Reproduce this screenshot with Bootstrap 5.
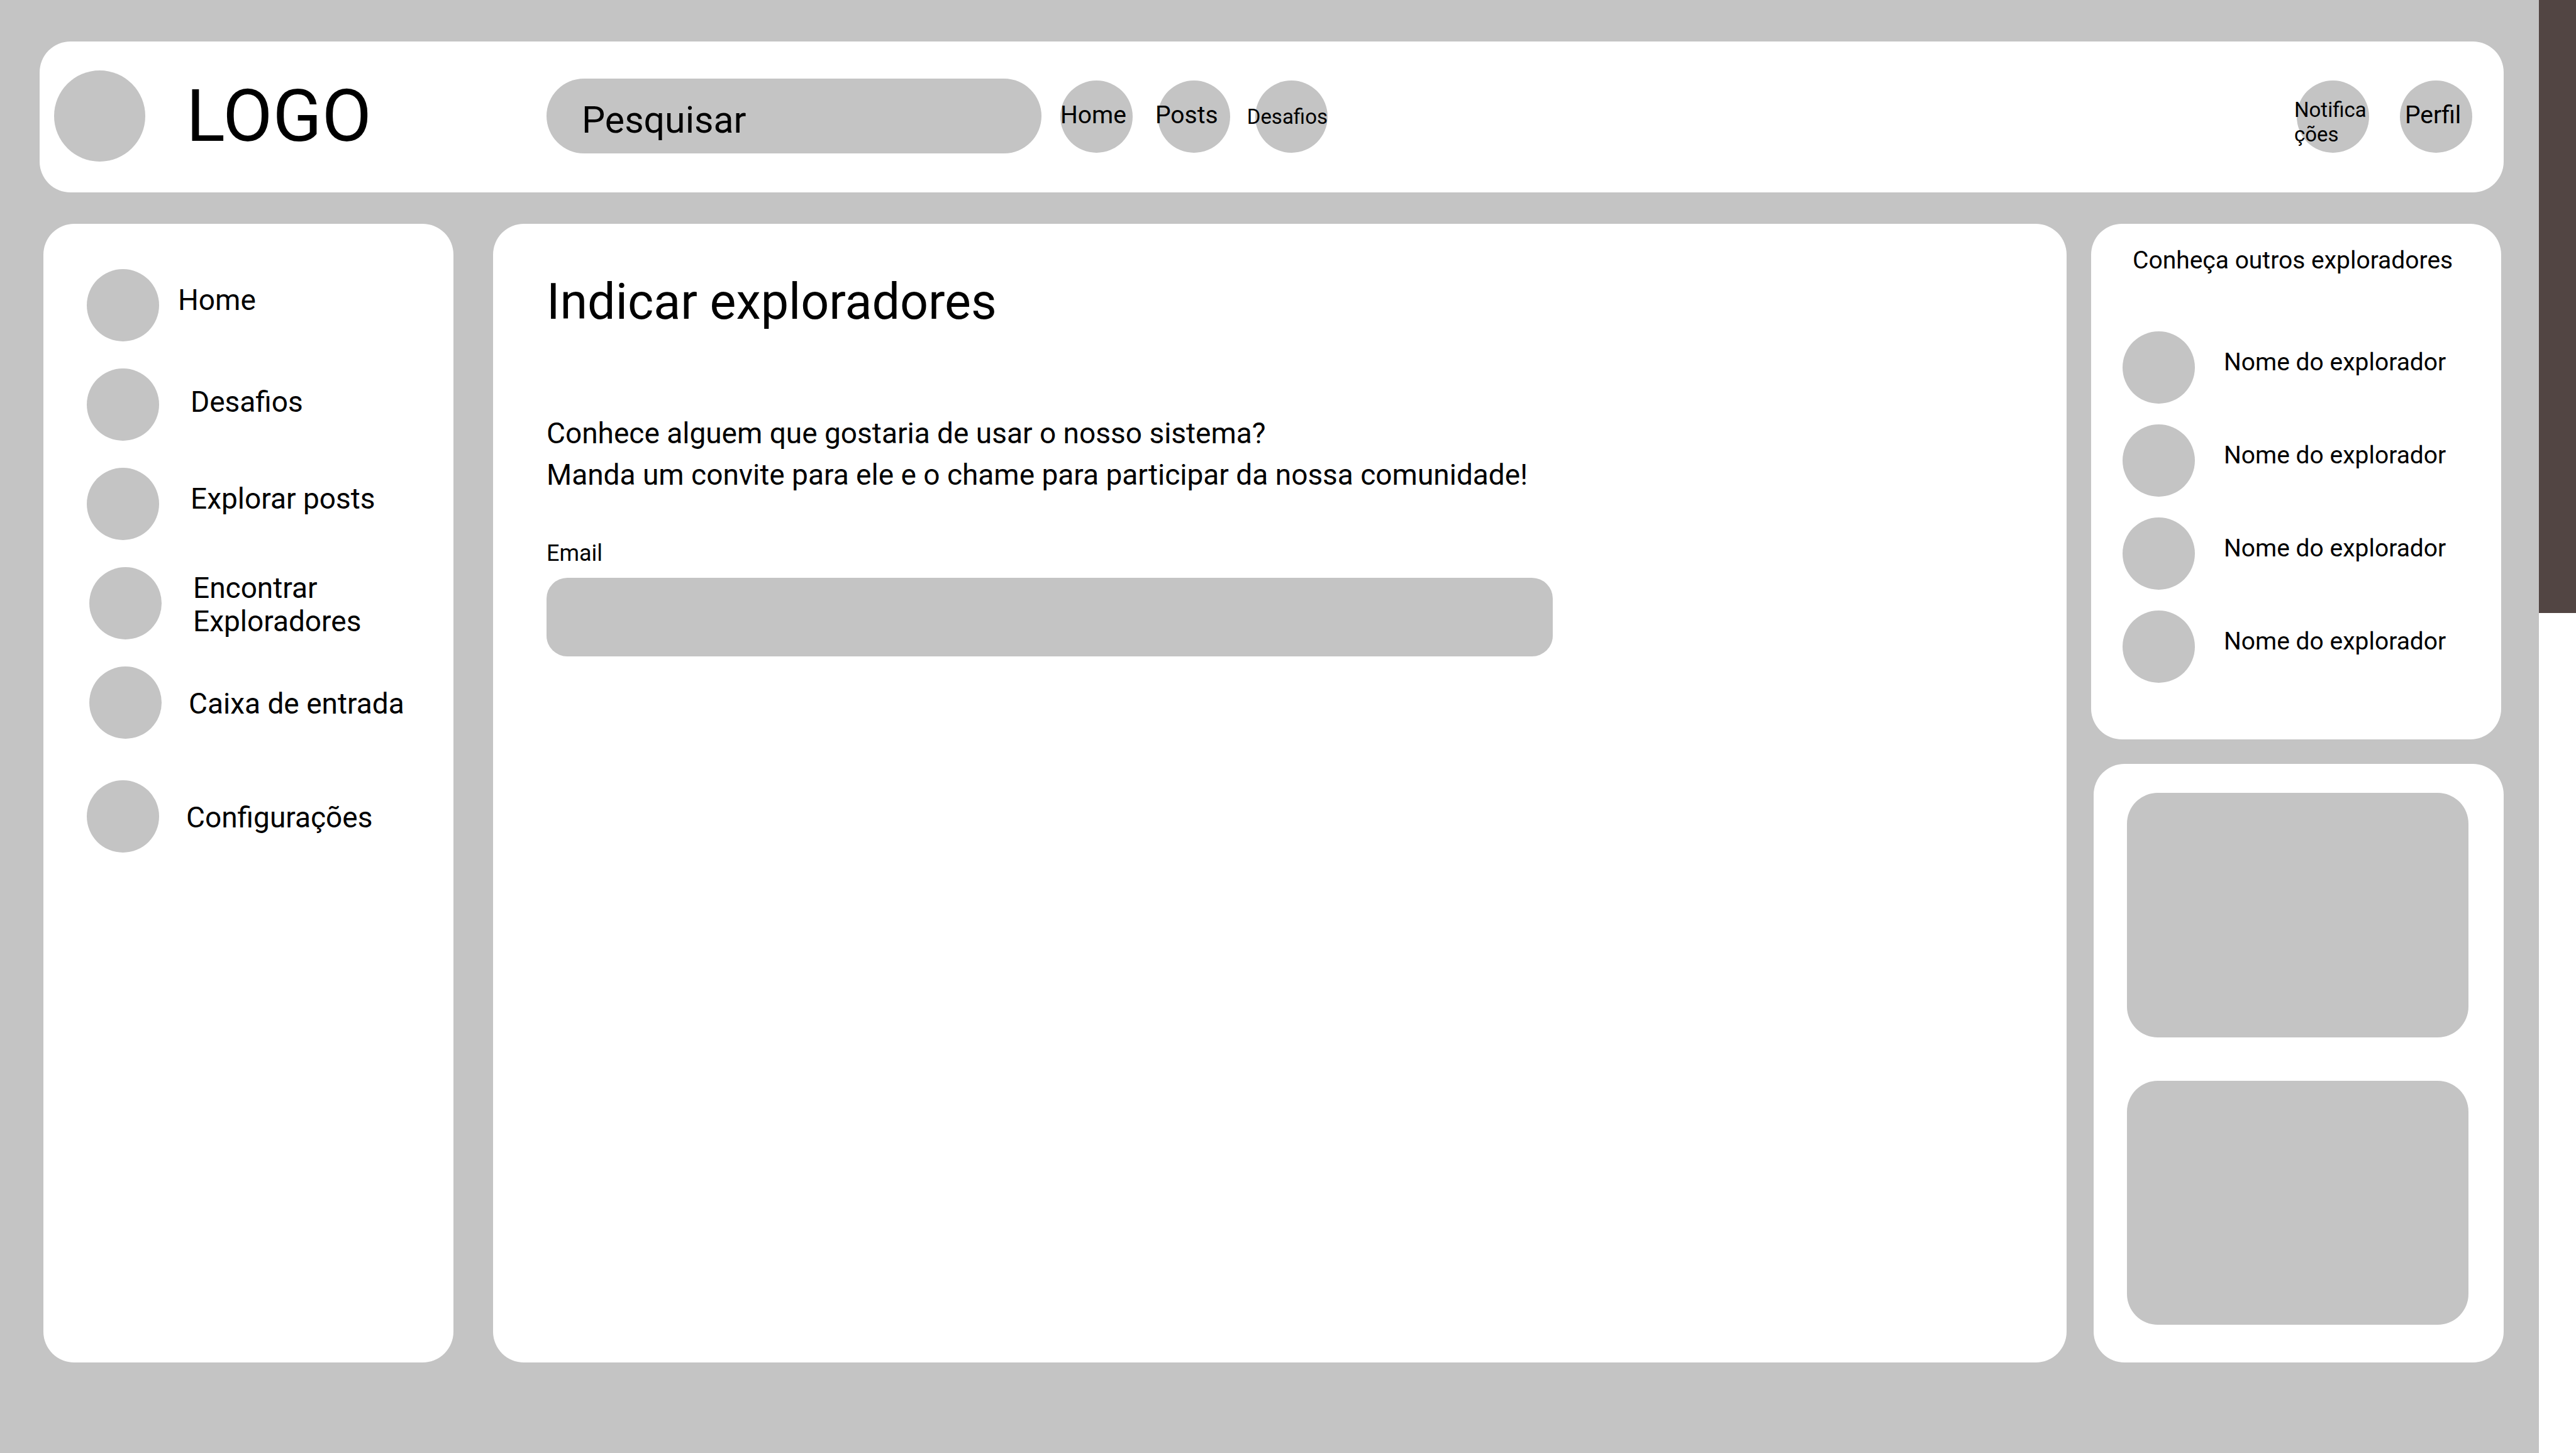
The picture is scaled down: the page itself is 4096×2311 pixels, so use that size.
<!DOCTYPE html>
<html lang="pt-BR">
<head>
<meta charset="utf-8">
<meta name="viewport" content="width=device-width, initial-scale=1">
<title>Indicar exploradores</title>
<link href="https://cdn.jsdelivr.net/npm/bootstrap@5.3.0/dist/css/bootstrap.min.css" rel="stylesheet">
<style>
  :root { --tone: #c4c4c4; --round: 49px; --dot: 115px; }
  body { font-family: Roboto, "Liberation Sans", sans-serif; color: #000; background: #fff; }
  a { color: inherit; text-decoration: none; }

  .app-shell { background: var(--tone); padding: 66px 56px 144px 63px; gap: 50px; }
  .edge-strip { width: 59px; }
  .edge-fill { height: 975px; background: #524543; }
  .panel { background: #fff; border-radius: var(--round); }

  .dot { width: var(--dot); height: var(--dot); border-radius: 50%; background: var(--tone); flex: none; }
  .text-s { font-size: 33px; line-height: 39px; }
  .text-m { font-size: 39px; line-height: 47px; }
  .text-l { font-size: 46px; line-height: 53px; }

  /* top bar */
  .topbar { padding: 46px 50px 49px 23px; }
  .brand { width: 783px; gap: 65px; font-size: 115px; line-height: 135px; }
  .brand-dot { width: 145px; height: 145px; }
  .search-box { width: 787px; height: 119px; border: 0; border-radius: 60px; background: var(--tone);
    padding: 12px 56px 0; font-size: 59px; color: #000; }
  .search-box::placeholder { color: #000; opacity: 1; }
  .top-links { gap: 40px; margin-left: 30px; padding-top: 2px; }
  .user-links { gap: 49px; padding-top: 2px; }
  .dot-link { display: flex; align-items: center; white-space: nowrap; }
  .hang { margin-left: -4px; }

  /* columns */
  .columns { padding-left: 6px; }
  .side-menu { width: 652px; margin-right: 63px; padding: 72px 69px; }
  .side-menu ul { gap: 43px; }
  .menu-link { gap: 50px; }
  .gap-near { gap: 30px; }
  .gap-mid { gap: 43px; }
  .inset { padding-left: 4px; }
  .last-item { margin-top: 23px; }

  .content { padding: 78px 85px; margin-right: 39px; }
  .title { font-size: 79px; line-height: 92px; font-weight: 400; margin-bottom: 130px; }
  .intro { font-size: 46px; line-height: 66px; margin-bottom: 71px; }
  .field-label { font-size: 36px; line-height: 42px; margin-bottom: 18px; }
  .field-box { max-width: 1600px; height: 125px; border: 0; border-radius: 33px; background: var(--tone);
    padding: 0 33px; font-size: 46px; }

  .right-column { width: 656px; gap: 39px; }
  .people { width: 652px; padding: 35px 50px 90px; }
  .people-title { font-weight: 400; margin-bottom: 89px; padding-left: 16px; }
  .people ul { gap: 33px; }
  .person { gap: 46px; }
  .ads { width: 652px; padding: 46px 56px 60px 53px; gap: 69px; }
  .ad-box { background: var(--tone); border-radius: var(--round); min-height: 300px; }
</style>
</head>
<body>
<div class="d-flex min-vh-100">
  <div class="app-shell d-flex flex-column flex-grow-1">

    <header class="topbar panel d-flex align-items-center">
      <a href="#" class="brand d-flex align-items-center">
        <span class="dot brand-dot"></span>
        <span>LOGO</span>
      </a>
      <form role="search">
        <input type="search" class="search-box d-block" placeholder="Pesquisar" aria-label="Pesquisar">
      </form>
      <nav class="top-links d-flex" aria-label="Principal">
        <a href="#" class="dot dot-link text-m"><span class="pb-1">Home</span></a>
        <a href="#" class="dot dot-link text-m"><span class="pb-1 hang">Posts</span></a>
        <a href="#" class="dot dot-link text-s justify-content-end"><span>Desafios</span></a>
      </nav>
      <nav class="user-links d-flex ms-auto" aria-label="Conta">
        <a href="#" class="dot dot-link text-s"><span class="pt-3 hang">Notifica<br>ções</span></a>
        <a href="#" class="dot dot-link text-m"><span class="pb-1 ms-2">Perfil</span></a>
      </nav>
    </header>

    <div class="columns d-flex flex-grow-1">
      <nav class="side-menu panel flex-shrink-0 text-l" aria-label="Menu">
        <ul class="list-unstyled d-flex flex-column mb-0">
          <li><a href="#" class="menu-link gap-near d-flex align-items-center"><span class="dot"></span><span class="pb-3">Home</span></a></li>
          <li><a href="#" class="menu-link d-flex align-items-center"><span class="dot"></span><span class="pb-2">Desafios</span></a></li>
          <li><a href="#" class="menu-link d-flex align-items-center"><span class="dot"></span><span class="pb-3">Explorar posts</span></a></li>
          <li class="inset"><a href="#" class="menu-link d-flex align-items-center"><span class="dot"></span><span class="pt-1">Encontrar<br>Exploradores</span></a></li>
          <li class="inset"><a href="#" class="menu-link gap-mid d-flex align-items-center"><span class="dot"></span><span class="pt-1 text-nowrap">Caixa de entrada</span></a></li>
          <li class="last-item"><a href="#" class="menu-link gap-mid d-flex align-items-center"><span class="dot"></span><span class="pt-1">Configurações</span></a></li>
        </ul>
      </nav>

      <main class="content panel flex-grow-1">
        <h1 class="title">Indicar exploradores</h1>
        <p class="intro">Conhece alguem que gostaria de usar o nosso sistema?<br>Manda um convite para ele e o chame para participar da nossa comunidade!</p>
        <form>
          <label class="field-label d-block" for="email">Email</label>
          <input id="email" type="email" class="field-box d-block w-100">
        </form>
      </main>

      <aside class="right-column d-flex flex-column flex-shrink-0">
        <section class="people panel text-m">
          <h2 class="people-title text-m text-nowrap">Conheça outros exploradores</h2>
          <ul class="list-unstyled d-flex flex-column mb-0">
            <li><a href="#" class="person d-flex align-items-center"><span class="dot"></span><span class="pb-3">Nome do explorador</span></a></li>
            <li><a href="#" class="person d-flex align-items-center"><span class="dot"></span><span class="pb-3">Nome do explorador</span></a></li>
            <li><a href="#" class="person d-flex align-items-center"><span class="dot"></span><span class="pb-3">Nome do explorador</span></a></li>
            <li><a href="#" class="person d-flex align-items-center"><span class="dot"></span><span class="pb-3">Nome do explorador</span></a></li>
          </ul>
        </section>
        <section class="ads panel d-flex flex-column flex-grow-1 align-self-end">
          <div class="ad-box flex-fill"></div>
          <div class="ad-box flex-fill"></div>
        </section>
      </aside>
    </div>
  </div>

  <div class="edge-strip flex-shrink-0">
    <div class="edge-fill"></div>
  </div>
</div>
<script src="https://cdn.jsdelivr.net/npm/bootstrap@5.3.0/dist/js/bootstrap.bundle.min.js"></script>
</body>
</html>
